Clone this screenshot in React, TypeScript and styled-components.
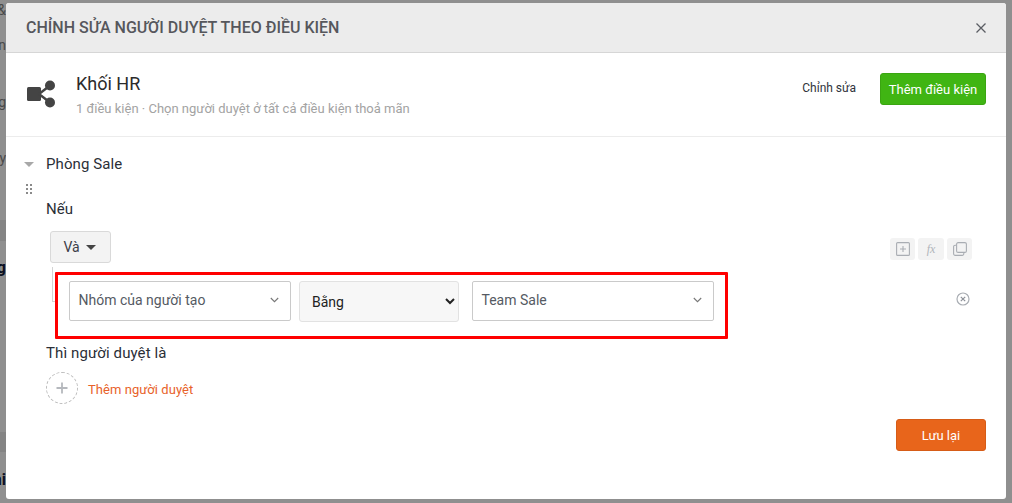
import React from "react";
import styled, { createGlobalStyle } from "styled-components";

const Global = createGlobalStyle`
  html, body { margin: 0; padding: 0; height: 100%; background: #8f8f8f; overflow: hidden; }
  body { font-family: Roboto, "Noto Sans", sans-serif; }
  #root { height: 100%; }
`;

const Page = styled.div`
  display: flex;
  width: 1012px;
  height: 503px;
  padding: 3px 6px 4px 0;
  box-sizing: border-box;
  background: #8f8f8f;
`;
const Sliver = styled.div`
  width: 6px;
  flex: none;
  overflow: hidden;
  display: flex;
  flex-direction: column;
`;
const SliverText = styled.div<{ $h: number; $dark?: boolean; $band?: boolean }>`
  height: ${(p) => p.$h}px;
  flex: none;
  line-height: ${(p) => p.$h}px;
  white-space: nowrap;
  direction: rtl;
  background: ${(p) => (p.$band ? "#848484" : "transparent")};
  font-weight: ${(p) => (p.$dark ? 700 : 400)};
  color: ${(p) => (p.$dark ? "#0a1020" : "#4a4a4a")};
  font-size: ${(p) => (p.$dark ? 16 : 14)}px;
`;
const Modal = styled.div`
  width: 1000px;
  background: #fff;
  border-radius: 3px;
  display: flex;
  flex-direction: column;
  overflow: hidden;
`;
const Header = styled.div`
  height: 49px;
  flex: none;
  background: #ececec;
  border-bottom: 1px solid #d6d6d6;
  display: flex;
  align-items: center;
  justify-content: space-between;
  padding: 0 20px;
`;
const Title = styled.div`
  font-size: 16px;
  font-weight: 500;
  color: #56575c;
  text-transform: uppercase;
`;
const CloseBtn = styled.div`
  width: 10px;
  height: 10px;
  display: flex;
`;
const Info = styled.div`
  height: 84px;
  flex: none;
  box-sizing: border-box;
  border-bottom: 1px solid #ececec;
  display: flex;
  align-items: flex-start;
  padding: 20px 20px 0 21px;
`;
const GroupIcon = styled.svg`
  width: 28px;
  height: 28px;
  margin: 7px 21px 0 0;
  flex: none;
`;
const InfoText = styled.div`
  flex: 1;
`;
const InfoTitle = styled.div`
  font-size: 18px;
  line-height: 22px;
  color: #2b2b2b;
`;
const InfoSub = styled.div`
  margin-top: 6px;
  font-size: 13px;
  line-height: 16px;
  color: #a3a3a3;
`;
const EditLink = styled.div`
  font-size: 12px;
  font-weight: 400;
  color: #2f333b;
  margin: 7px 24px 0 0;
  line-height: 16px;
`;
const PrimaryButton = styled.div<{ $bg: string; $border: string; $w: number }>`
  width: ${(p) => p.$w}px;
  height: 32px;
  box-sizing: border-box;
  background: ${(p) => p.$bg};
  border: 1px solid ${(p) => p.$border};
  border-radius: 3px;
  color: #fff;
  font-size: 13px;
  font-weight: 400;
  display: flex;
  align-items: center;
  justify-content: center;
`;
const Body = styled.div`
  flex: 1;
  padding: 18px 20px 0 18px;
  display: flex;
  flex-direction: column;
`;
const SectionHead = styled.div`
  display: flex;
  align-items: center;
  height: 18px;
`;
const Caret = styled.div`
  width: 0;
  height: 0;
  border-left: 5.5px solid transparent;
  border-right: 5.5px solid transparent;
  border-top: 5.5px solid #a8a8a8;
  margin-right: 12px;
`;
const SectionName = styled.div`
  font-size: 15px;
  font-weight: 400;
  letter-spacing: 0.1px;
  color: #2b2f37;
`;
const Drag = styled.svg`
  width: 6px;
  height: 10px;
  margin: 11px 0 0 2px;
  flex: none;
`;
const Indented = styled.div`
  padding-left: 22px;
  display: flex;
  flex-direction: column;
`;
const Label = styled.div<{ $top: number }>`
  margin-top: ${(p) => p.$top}px;
  font-size: 15px;
  font-weight: 400;
  letter-spacing: 0.1px;
  line-height: 18px;
  color: #2b2f37;
`;
const GroupBar = styled.div`
  margin-top: 13px;
  display: flex;
  justify-content: space-between;
  align-items: center;
  height: 32px;
  padding: 0 14px 0 4px;
`;
const AndButton = styled.div`
  width: 61px;
  height: 32px;
  box-sizing: border-box;
  background: #f3f3f3;
  border: 1px solid #d9d9d9;
  border-radius: 3px;
  padding-right: 2px;
  font-size: 14px;
  color: #3c4048;
  display: flex;
  align-items: center;
  justify-content: center;
  gap: 6px;
`;
const AndCaret = styled.span`
  width: 0;
  height: 0;
  border-left: 5px solid transparent;
  border-right: 5px solid transparent;
  border-top: 5px solid #444;
`;
const ToolGroup = styled.div`
  display: flex;
  gap: 3px;
  margin-top: 4px;
`;
const ToolButton = styled.div<{ $w: number }>`
  width: ${(p) => p.$w}px;
  height: 22px;
  background: #f3f3f3;
  border-radius: 3px;
  display: flex;
  align-items: center;
  justify-content: center;
  color: #b0b4ba;
  font-family: "Liberation Serif", serif;
  font-style: italic;
  font-size: 12px;
`;
const ConditionArea = styled.div`
  display: flex;
  align-items: flex-start;
  margin-top: 4px;
`;
const Tree = styled.div`
  width: 16px;
  height: 35px;
  flex: none;
  margin-left: 6px;
  margin-right: -16px;
  box-sizing: border-box;
  border-left: 1px solid #d4d4d4;
  border-bottom: 1px solid #d4d4d4;
`;
const Highlight = styled.div`
  margin: 5px 0 0 3px;
  width: 673px;
  height: 67px;
  box-sizing: border-box;
  border: 3px solid #f00;
  border-radius: 1px;
  background: #fff;
  padding: 6px 10px 0 11px;
  display: flex;
  align-items: flex-start;
  position: relative;
`;
const FakeSelect = styled.div<{ $w: number }>`
  width: ${(p) => p.$w}px;
  height: 40px;
  flex: none;
  box-sizing: border-box;
  border: 1px solid #cacaca;
  border-radius: 2px;
  display: flex;
  align-items: center;
  justify-content: space-between;
  padding: 0 11px 2px 8.5px;
  font-size: 14px;
  color: #555a63;
`;
const NativeSelect = styled.select`
  width: 160px;
  height: 41px;
  flex: none;
  margin: 0 13px 0 8px;
  box-sizing: border-box;
  background: #f7f7f7;
  border: 1px solid #e2e2e2;
  border-radius: 3px;
  font-family: Roboto, sans-serif;
  font-size: 14px;
  color: #222;
  padding: 0 8px;
`;
const Chevron = styled.svg`
  width: 9px;
  height: 6px;
  flex: none;
`;
const RemoveIcon = styled.svg`
  width: 14px;
  height: 14px;
  flex: none;
  margin: 25px 0 0 228px;
`;
const AddRow = styled.div`
  display: flex;
  align-items: center;
  margin-top: 10px;
  gap: 10px;
`;
const AddCircle = styled.div`
  width: 32px;
  height: 32px;
  box-sizing: border-box;
  border: 1px dashed #bdbdbd;
  border-radius: 50%;
  display: flex;
  align-items: center;
  justify-content: center;
`;
const AddText = styled.div`
  font-size: 13px;
  font-weight: 400;
  letter-spacing: 0.05px;
  color: #e8622a;
  padding-top: 2px;
`;
const Footer = styled.div`
  display: flex;
  justify-content: flex-end;
  margin-top: 15px;
`;

export default function App() {
  return (
    <>
      <Global />
      <Page>
        <Sliver>
          <SliverText $h={14}>&amp;</SliverText>
          <SliverText $h={56}>n</SliverText>
          <SliverText $h={58}>g</SliverText>
          <SliverText $h={54}>y</SliverText>
          <SliverText $h={35} />
          <SliverText $h={21} $band />
          <SliverText $h={9} />
          <SliverText $h={36} $dark>ng</SliverText>
          <SliverText $h={146} />
          <SliverText $h={20} $band />
          <SliverText $h={18} />
          <SliverText $h={20} $dark>hi</SliverText>
        </Sliver>
        <Modal>
          <Header>
            <Title>Chỉnh sửa người duyệt theo điều kiện</Title>
            <CloseBtn>
              <svg width="10" height="10" viewBox="0 0 10 10">
                <path d="M.5.5l9 9M9.5.5l-9 9" stroke="#5a5d63" strokeWidth="1.3" />
              </svg>
            </CloseBtn>
          </Header>
          <Info>
            <GroupIcon viewBox="0 0 28 28">
              <rect x="0" y="7" width="14" height="14" rx="1.5" fill="#444" />
              <circle cx="23" cy="5.5" r="5" fill="#444" />
              <circle cx="23" cy="22.5" r="5" fill="#444" />
              <path d="M12 14L23 5.5M12 14l11 8.5" stroke="#444" strokeWidth="2.4" fill="none" />
            </GroupIcon>
            <InfoText>
              <InfoTitle>Khối HR</InfoTitle>
              <InfoSub>1 điều kiện · Chọn người duyệt ở tất cả điều kiện thoả mãn</InfoSub>
            </InfoText>
            <EditLink>Chỉnh sửa</EditLink>
            <PrimaryButton $bg="#40b513" $border="#3aa511" $w={106}>Thêm điều kiện</PrimaryButton>
          </Info>
          <Body>
            <SectionHead>
              <Caret />
              <SectionName>Phòng Sale</SectionName>
            </SectionHead>
            <Drag viewBox="0 0 6 10">
              {[0, 4, 8].map((y) => (
                <g key={y} fill="#8a8a8a">
                  <rect x="0" y={y} width="2" height="2" />
                  <rect x="4" y={y} width="2" height="2" />
                </g>
              ))}
            </Drag>
            <Indented>
              <Label $top={6}>Nếu</Label>
              <GroupBar>
                <AndButton>Và<AndCaret /></AndButton>
                <ToolGroup>
                  <ToolButton $w={25}>
                    <svg width="14" height="14" viewBox="0 0 14 14" fill="none" stroke="#a9adb3" strokeWidth="1.1">
                      <rect x=".6" y=".6" width="12.8" height="12.8" rx="1" />
                      <path d="M7 4v6M4 7h6" />
                    </svg>
                  </ToolButton>
                  <ToolButton $w={26}>fx</ToolButton>
                  <ToolButton $w={25}>
                    <svg width="14" height="14" viewBox="0 0 14 14" fill="none" stroke="#a9adb3" strokeWidth="1.1">
                      <rect x="3.6" y=".6" width="9.8" height="9.8" rx="1.5" />
                      <path d="M3.2 3.2h-1A1.6 1.6 0 0 0 .6 4.8v7A1.6 1.6 0 0 0 2.2 13.4h7a1.6 1.6 0 0 0 1.6-1.6v-1" />
                    </svg>
                  </ToolButton>
                </ToolGroup>
              </GroupBar>
              <ConditionArea>
                <Tree />
                <Highlight>
                  <FakeSelect $w={222}>
                    Nhóm của người tạo
                    <Chevron viewBox="0 0 9 6">
                      <path d="M.8 1l3.7 3.7L8.2 1" fill="none" stroke="#777" strokeWidth="1.1" />
                    </Chevron>
                  </FakeSelect>
                  <NativeSelect defaultValue="Bằng">
                    <option>Bằng</option>
                    <option>Khác</option>
                  </NativeSelect>
                  <FakeSelect $w={242}>
                    Team Sale
                    <Chevron viewBox="0 0 9 6">
                      <path d="M.8 1l3.7 3.7L8.2 1" fill="none" stroke="#777" strokeWidth="1.1" />
                    </Chevron>
                  </FakeSelect>
                </Highlight>
                <RemoveIcon viewBox="0 0 14 14">
                  <circle cx="7" cy="7" r="6" fill="none" stroke="#a9adb3" strokeWidth="1.2" />
                  <path d="M4.8 4.8l4.4 4.4M9.2 4.8l-4.4 4.4" stroke="#8e9299" strokeWidth="1.2" />
                </RemoveIcon>
              </ConditionArea>
              <Label $top={5}>Thì người duyệt là</Label>
              <AddRow>
                <AddCircle>
                  <svg width="12" height="12" viewBox="0 0 12 12">
                    <path d="M6 .5v11M.5 6h11" stroke="#b5b8bd" strokeWidth="1.8" />
                  </svg>
                </AddCircle>
                <AddText>Thêm người duyệt</AddText>
              </AddRow>
            </Indented>
            <Footer>
              <PrimaryButton $bg="#e8651b" $border="#d65c17" $w={90}>Lưu lại</PrimaryButton>
            </Footer>
          </Body>
        </Modal>
      </Page>
    </>
  );
}
